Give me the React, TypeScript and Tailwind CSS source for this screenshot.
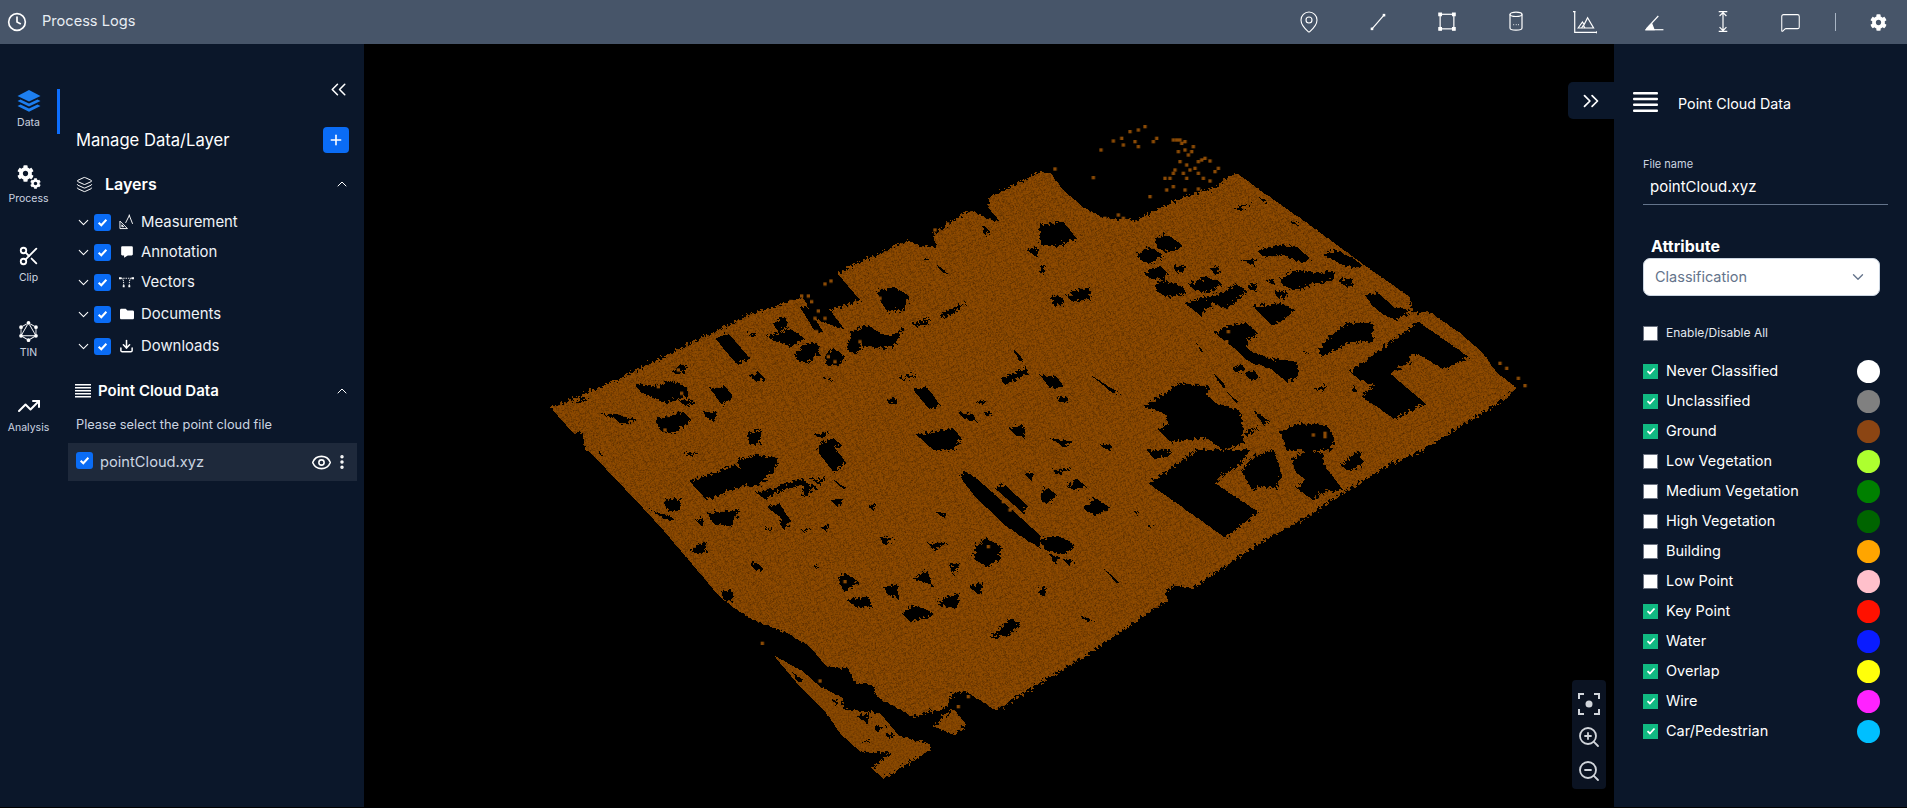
import React from 'react';
import {
  ChevronDown,
  ChevronUp,
  ChevronsLeft,
  ChevronsRight,
  Clock,
  Download,
  EllipsisVertical,
  Eye,
  Layers,
  MapPin,
  MessageSquare,
  Plus,
  Scissors,
  TrendingUp,
  ZoomIn,
  ZoomOut,
} from 'lucide-react';
import { FaCog, FaFolder } from 'react-icons/fa';
import { BiSolidMessage } from 'react-icons/bi';
import { SiGraphql } from 'react-icons/si';

const HOLES_TL = [
  '525,685 565,670 630,745 590,762', '680,680 750,655 795,685 750,710 700,690',
  '765,735 800,700 835,700 838,730 800,760 775,755', '855,735 880,715 915,740 900,765 860,768',
  '920,720 935,665 985,645 1020,670 1050,680 1095,650 1060,710 1010,715 970,705 945,730',
  '1010,545 1060,530 1110,560 1090,600 1040,605 1020,570', '1120,640 1170,625 1165,640 1125,652',
  '1200,615 1280,575 1240,610 1205,625', '395,785 420,763 445,770 415,795',
  '285,820 345,830 380,810 440,830 440,860 380,880 300,845', '510,835 555,830 580,860 545,885',
  '415,870 470,872 440,890', '490,905 530,905 525,935 495,920', '630,800 655,785 675,805 650,815',
  '165,908 230,915 290,928 245,945 225,925', '345,930 430,905 455,930 400,970 365,965',
  '90,880 150,860 120,880', '1380,810 1460,772 1465,790 1395,825', '1120,840 1160,830 1200,885 1170,900',
  '1080,805 1125,790 1120,800 1085,812', '1040,870 1070,865 1075,880 1045,880',
  '1250,905 1300,915 1310,935 1270,925', '1330,905 1360,910 1340,920',
  '1130,975 1210,960 1240,955 1265,985 1240,1020 1180,1020', '1405,955 1450,945 1455,985 1420,970',
  '620,970 665,960 660,1000 630,1005', '815,975 870,965 850,985', '840,1000 880,985 905,1005 880,1020 835,1020',
  '1300,875 1340,870 1330,885', '850,805 880,800 870,810', '1415,710 1450,750 1440,755',
  '700,640 735,620 745,650 715,665', '780,590 800,590 850,665 825,665', '620,672 650,665 640,682',
  '1150,440 1170,450 1155,455', '1190,465 1225,490 1210,490', '1330,350 1350,360 1335,380', '1460,420 1490,410 1490,440',
];

const HOLES_TR = [
  '0,345 70,335 110,385 50,410 0,405', '345,385 380,372 425,405 400,425 355,420',
  '292,430 330,412 370,435 330,460 300,450', '310,490 360,468 385,490 370,510 330,505',
  '400,470 435,465 430,485 410,488', '345,520 370,512 430,530 435,550 380,562 350,545',
  '445,525 495,500 545,520 510,548 465,540', '435,580 500,560 550,545 590,522 622,545 560,595 520,580 480,615',
  '625,525 650,520 650,540 630,540', '702,545 740,540 745,560 715,565',
  '650,420 720,405 770,410 810,445 790,460 730,435 670,440', '850,435 885,420 940,445 970,470 920,470',
  '600,450 650,448 640,465', '720,510 770,480 830,490 885,485 880,510 810,525 770,540 730,530',
  '680,515 700,505 705,525', '895,510 935,505 940,530 905,525', '640,590 720,580 765,600 730,630 695,645 670,620',
  '525,670 570,645 620,640 655,670 620,690 625,720 690,745 770,755 775,800 740,815 690,775 625,755 590,720',
  '575,775 605,760 615,780 590,790', '615,795 640,780 660,805 630,810', '525,795 555,825 545,830',
  '470,700 490,725 480,725', '975,555 1015,550 1060,590 1115,600 1070,630 1030,615 1000,590',
  '930,785 1000,735 1060,690 1135,635 1285,740 1210,778 1140,735 1105,735 1110,755 1050,790 1155,880 1065,928 965,860 1005,825 960,810',
  '870,680 920,640 1000,640 1000,695 930,695 890,720 840,740 840,715', '30,570 50,555 75,570 60,585 40,585',
  '80,560 110,540 150,530 150,565 100,575',
  '310,890 420,820 510,830 500,855 530,880 600,900 610,960 610,1000 550,1020 500,985 390,995 355,960 385,940 375,910',
  '720,965 780,940 860,945 885,990 870,1020 740,1020', '640,900 690,935 670,945', '610,970 665,945 620,980',
  '0,470 15,465 15,485 0,490', '580,295 640,275 600,300', '660,265 680,270 675,280',
  '0,795 50,800 70,830 30,835', '50,862 85,860 80,875 55,875', '750,335 780,340 765,347',
  '790,725 805,725 800,735', '560,845 600,880 590,880', '30,985 100,995 70,1010', '180,1005 215,1000 210,1020 190,1015',
  '820,835 860,825 850,845', '940,825 950,845 940,845', '150,795 240,850 220,850', '510,475 540,470 530,500',
];

const HOLES_BL = [
  '450,95 585,45 605,60 590,30 650,15 715,25 705,60 660,105 600,110 500,150', '830,0 890,0 920,40 880,65',
  '650,130 790,85 800,100 700,130 680,150', '1260,80 1275,65 1310,85 1500,255 1500,295 1400,230 1300,135',
  '1365,115 1395,105 1460,165 1450,190', '1310,285 1340,265 1385,290 1380,330 1340,350 1300,325',
  '895,385 915,368 955,395 915,430', '630,345 650,338 670,355 650,365', '1350,565 1410,505 1445,520 1405,555',
  '1220,440 1260,430 1250,475 1190,465', '1085,490 1120,465 1175,485 1180,500 1110,515',
  '1120,390 1160,360 1180,410 1150,395', '920,450 985,440 995,470 950,470', '1030,410 1075,405 1075,445 1045,435',
  '1165,280 1225,280 1180,300', '1225,345 1260,340 1240,375', '1285,410 1330,395 1320,435', '1020,260 1070,260 1030,285',
  '370,150 425,145 420,180 385,185', '330,180 380,195 410,210 380,210', '500,190 600,180 570,230 520,220',
  '465,210 490,205 490,235', '680,170 720,160 750,210 730,245 720,200', '670,235 700,235 690,240', '790,100 830,110 790,145',
  '840,230 870,225 860,245', '780,240 810,235 790,245', '545,425 580,422 575,455 550,450', '460,290 500,275 495,310 455,310',
  '1190,190 1220,185 1215,205', '990,170 1010,160 995,180', '825,350 835,345 830,365', '175,5 185,5 180,15',
  '430,12 480,5 450,20', '1450,70 1480,70 1475,95', '800,80 860,100 820,90', '870,150 920,145 890,170',
  '950,800 990,790 985,820', '1000,830 1040,825 1010,845', '880,750 895,745 885,770', '1040,850 1070,855 1045,865',
  '760,670 790,690 770,695', '960,880 1000,860 980,875', '820,95 860,80 840,105', '880,90 930,120 900,110',
];

const HOLES_BR = [
  '325,100 400,50 470,0 630,0 600,45 555,70 525,100 655,185 555,262', '605,60 640,20 700,0 725,70 710,115 665,110 635,120',
  '755,30 800,0 850,10 855,50 910,120 850,125 820,150 770,115 800,90 770,70', '900,45 960,0 970,40 930,65',
  '320,0 395,0 385,20 340,25', '0,130 25,115 50,135 25,160 5,155', '80,110 110,85 140,110 100,120',
  '130,175 165,145 215,175 165,195', '40,60 95,55 50,75', '0,270 50,255 105,285 70,315 15,300',
  '30,315 60,320 45,340', '70,330 100,330 85,345', '375,430 400,405 430,415 390,460', '285,185 300,185 290,195',
  '325,230 345,225 330,235', '0,415 20,415 15,435 0,435', '185,348 240,400 230,400', '120,495 165,515 130,510',
];

const DOTS_TR = [
  215, 88, 240, 80, 245, 100, 265, 60, 290, 55, 310, 45, 280, 90, 290, 105, 335, 90, 345, 80, 395, 85, 415, 85, 430, 90,
  410, 120, 430, 115, 455, 105, 440, 130, 415, 150, 435, 160, 460, 170, 490, 140, 505, 148, 530, 170, 520, 180, 400, 175,
  395, 185, 425, 185, 435, 200, 470, 185, 485, 200, 505, 208, 370, 200, 385, 200, 395, 225, 430, 235, 375, 235, 470, 232,
  485, 243, 325, 255, 178, 115, 40, 172, 155, 198, 150, 310, 190, 320, 230, 310, 245, 320, 1375, 755, 1395, 770, 1430, 800,
  1450, 822, 405, 85, 420, 95, 450, 120, 470, 150, 480, 145, 445, 175, 360, 560, 1020, 620, 1030, 640, 560, 660, 555, 690,
  660, 770, 620, 900, 815, 970, 850, 965, 850, 975,
];
const DOTS_TL = [
  850, 517, 868, 508, 1180, 355, 1218, 337, 780, 553, 800, 553, 748, 570, 810, 570, 830, 598, 820, 620, 850, 620, 825, 660,
  638, 622, 385, 740, 365, 755, 320, 780, 295, 788, 255, 800, 270, 795, 860, 735, 880, 750, 955, 690, 1015, 560, 380, 910,
  370, 955, 350, 825, 420, 845, 410, 775,
];
const DOTS_BL = [662, 575, 1250, 765, 1280, 735, 835, 688, 775, 660, 1385, 150, 1405, 175, 1340, 285, 910, 390];

function Crop({ x, y, holes, dots }: { x: number; y: number; holes?: string[]; dots?: number[] }) {
  return (
    <g transform={`translate(${x} ${y}) scale(0.33333)`}>
      {holes?.map((p) => <polygon key={p} points={p} fill="#000" />)}
      {dots?.map((v, i) => (i % 2 === 0 ? <rect key={i} x={v} y={dots[i + 1]} width="10" height="10" fill="#8a4a05" /> : null))}
    </g>
  );
}

function PointCloud() {
  return (
    <svg viewBox="364 44 1250 763" className="h-full w-full">
      <defs>
        <pattern id="scan" width="9" height="6" patternUnits="userSpaceOnUse" patternTransform="rotate(-27)">
          <rect width="9" height="6" fill="#8f4c05" />
          <rect y="3" width="9" height="1" fill="#703a02" />
          <rect x="4" width="1" height="6" fill="#7d4304" />
        </pattern>
        <filter id="rough" x="364" y="44" width="1250" height="763" filterUnits="userSpaceOnUse">
          <feTurbulence type="fractalNoise" baseFrequency="0.35" numOctaves="2" seed="4" result="n" />
          <feDisplacementMap in="SourceGraphic" in2="n" scale="8" result="d" />
          <feTurbulence type="fractalNoise" baseFrequency="0.6" numOctaves="1" seed="9" />
          <feColorMatrix values="0 0 0 0 0  0 0 0 0 0  0 0 0 0 0  1.2 0 0 0 -0.5" />
          <feComposite in2="d" operator="in" result="g" />
          <feMerge>
            <feMergeNode in="d" />
            <feMergeNode in="g" />
          </feMerge>
        </filter>
      </defs>
      <g filter="url(#rough)" shapeRendering="crispEdges">
        <polygon
          fill="url(#scan)"
          points="551,408 617,380 693,342 753,313 780,305 803,297 813,317 827,323 845,330 830,310 860,300 837,273 908,240 920,246 937,247 933,235 953,220 970,210 987,218 1000,222 988,207 990,197 1040,172 1050,172 1063,190 1083,207 1103,218 1137,220 1163,207 1190,195 1217,187 1223,180 1237,173 1257,188 1307,223 1367,267 1410,297 1412,313 1430,312 1460,333 1483,353 1497,373 1517,388 1507,397 1423,450 1393,463 1343,493 1307,517 1260,543 1227,565 1193,588 1173,585 1168,600 1133,623 1090,653 1040,683 997,710 990,707 967,692 952,693 948,707 913,717 877,697 873,685 855,683 848,668 827,667 810,647 787,633 753,620 737,610 720,597 703,577 663,530 643,508 588,450 585,450 583,433 573,433"
        />
        <g transform="translate(540 450) scale(0.33333)" fill="url(#scan)">
          <polygon points="700,615 790,665 840,710 910,745 905,775 1020,790 1080,860 1120,870 1170,880 1170,900 1030,985 995,955 1060,905 960,905 900,850 860,790 780,710" />
          <polygon points="1180,830 1240,775 1280,825 1240,855" />
        </g>
        <Crop x={540} y={110} holes={HOLES_TL} />
        <Crop x={1040} y={110} holes={HOLES_TR} />
        <Crop x={540} y={450} holes={HOLES_BL} />
        <Crop x={1040} y={450} holes={HOLES_BR} />
      </g>
      <Crop x={540} y={110} dots={DOTS_TL} />
      <Crop x={1040} y={110} dots={DOTS_TR} />
      <Crop x={540} y={450} dots={DOTS_BL} />
    </svg>
  );
}

function Tool({ children }: { children: React.ReactNode }) {
  return <svg viewBox="-2 -2 28 28" className="h-[24px] w-[24px]" fill="none" stroke="#fff" strokeWidth="1.4">{children}</svg>;
}

function TopBar() {
  return (
    <div className="flex h-[44px] shrink-0 items-center bg-[#475569] pl-[7px] pr-[20px] text-white">
      <Clock size={20} strokeWidth={2} />
      <span className="ml-[15px] text-[14.6px] text-[#e8edf3]">Process Logs</span>
      <div className="ml-auto flex items-center gap-[45px]">
        <MapPin size={24} strokeWidth={1.1} />
        <Tool>
          <path d="M5 20 19 4" />
          <rect x="3.500" y="18.500" width="3" height="3" fill="#fff" stroke="none" />
          <rect x="17.500" y="2.500" width="3" height="3" fill="#fff" stroke="none" />
        </Tool>
        <Tool>
          <rect x="4" y="3" width="16" height="17" strokeWidth="1.400" />
          <path d="M2.500 1.500h3v3h-3zM18.500 1.500h3v3h-3zM2.500 18.500h3v3h-3zM18.500 18.500h3v3h-3z" fill="#fff" />
        </Tool>
        <Tool>
          <ellipse cx="12" cy="3" rx="7" ry="2.600" />
          <path d="M5 3v16c0 1.500 3 2.500 7 2.500s7-1 7-2.500V3" />
          <path d="M9 15h.8M11.800 15h.8M14.600 15h.8" strokeWidth="1.400" />
        </Tool>
        <Tool>
          <path d="M0 0v24h26M-2 0h3M26 22.500v3" />
          <path d="M4 19 9 12l2 3 4-8 7 12z" />
          <path d="M8 19l2-3 2 3" />
        </Tool>
        <Tool>
          <path d="M3 20 17 5" />
          <path d="M2 21h21" />
          <path d="M3 21l6.500-6.500L12 21z" fill="#fff" />
        </Tool>
        <Tool>
          <path d="M7 0h10M7 23h10M12 0v23M8 5l4-4 4 4M8 18l4 4 4-4" />
        </Tool>
        <MessageSquare size={21} strokeWidth={1.2} className="mr-[-11px]" />
        <div className="h-[18px] w-[1px] bg-[#a9b5c4]" />
        <FaCog size={17} className="ml-[-11px]" />
      </div>
    </div>
  );
}

function RailItem({ icon, label, className }: { icon: React.ReactNode; label: string; className: string }) {
  return (
    <div className={`flex w-[57px] flex-col items-center ${className}`}>
      <div className="flex h-[24px] items-center justify-center">{icon}</div>
      <span className="mt-[3px] text-[10.5px] leading-[14px] text-[#cbd5e1]">{label}</span>
    </div>
  );
}

function Rail() {
  return (
    <div className="flex w-[60px] shrink-0 flex-col pt-[45px]">
      <div className="flex h-[45px] border-r-[3px] border-[#0d6efd]">
        <RailItem
          className=""
          label="Data"
          icon={
            <svg viewBox="0 0 24 24" className="h-[24px] w-[24px]" fill="#1d7ff0">
              <path d="M12 1 23.500 7 12 12.600.5 7z" />
              <path d="M3.500 10.400 12 14.600l8.500-4.200 3 1.500L12 17.600.5 11.900z" />
              <path d="M3.500 15.400 12 19.600l8.500-4.200 3 1.500L12 22.800.5 16.900z" />
            </svg>
          }
        />
      </div>
      <RailItem
        className="mt-[31px]"
        label="Process"
        icon={
          <div className="relative h-[24px] w-[24px]">
            <FaCog size={17} className="absolute left-0 top-0 text-white" />
            <FaCog size={11} className="absolute bottom-0 right-0 text-white" />
          </div>
        }
      />
      <RailItem className="mt-[38px]" label="Clip" icon={<Scissors size={22} className="text-white" strokeWidth={2} />} />
      <RailItem className="mt-[34px]" label="TIN" icon={<SiGraphql size={21} className="text-white" />} />
      <RailItem className="mt-[34px]" label="Analysis" icon={<TrendingUp size={24} className="text-white" strokeWidth={2} />} />
    </div>
  );
}

function BlueCheck() {
  return (
    <span className="flex h-[17px] w-[17px] shrink-0 items-center justify-center rounded-[3px] bg-[#0a6cf5]">
      <svg viewBox="0 0 12 12" className="h-[11px] w-[11px]" fill="none" stroke="#fff" strokeWidth="2.200">
        <path d="M1.800 6.200 4.700 9l5.500-6" />
      </svg>
    </span>
  );
}

const TREE = [
  {
    label: 'Measurement',
    gap: 'mt-[16px]',
    icon: (
      <svg viewBox="0 0 16 16" className="h-[16px] w-[16px]" fill="none" stroke="#fff" strokeWidth="1">
        <path d="M1 15V7l8 8zM3 13v-2l2 2z" />
        <path d="M11 1l-4 8M11 1l3.500 9M11 0v2" />
      </svg>
    ),
  },
  { label: 'Annotation', gap: 'mt-[6px]', icon: <BiSolidMessage size={14} className="text-white" /> },
  {
    label: 'Vectors',
    gap: 'mt-[6px]',
    icon: (
      <svg viewBox="0 0 16 12" className="h-[12px] w-[16px]" fill="none" stroke="#fff" strokeWidth="1">
        <path d="M2 2h12M5 10c0-4 0-7-2-8M11 10c0-4 0-7 2-8" strokeDasharray="1.500 1" />
        <path d="M0 1h2.500v2H0zM13.500 1H16v2h-2.500zM4 9.500h2v2H4zM10 9.500h2v2h-2z" fill="#fff" stroke="none" />
      </svg>
    ),
  },
  { label: 'Documents', gap: 'mt-[8px]', icon: <FaFolder size={14} className="text-white" /> },
  { label: 'Downloads', gap: 'mt-[8px]', icon: <Download size={16} strokeWidth={2.400} className="text-white" /> },
];

function DataPanel() {
  return (
    <div className="flex flex-1 flex-col pl-[8px] pr-[7px]">
      <div className="flex justify-end pr-[6px] pt-[33px]">
        <ChevronsLeft size={25} strokeWidth={1.500} className="text-white" />
      </div>
      <div className="mt-[25px] flex h-[26px] items-center justify-between pl-[8px]">
        <span className="text-[16.6px] text-white">Manage Data/Layer</span>
        <span className="mr-[8px] flex h-[26px] w-[26px] items-center justify-center rounded-[4px] bg-[#0a6cf5]">
          <Plus size={16} strokeWidth={2.400} className="text-white" />
        </span>
      </div>
      <div className="mt-[21px] flex h-[20px] items-center pl-[8px]">
        <Layers size={17} strokeWidth={1.400} className="text-white" />
        <span className="ml-[12px] text-[16px] font-semibold text-white">Layers</span>
        <ChevronUp size={16} className="ml-auto mr-[7px] text-white" strokeWidth={1.500} />
      </div>
      {TREE.map((row) => (
        <div key={row.label} className={`flex h-[24px] items-center pl-[7px] ${row.gap}`}>
          <ChevronDown size={17} strokeWidth={1.500} className="text-white" />
          <span className="ml-[2px]"><BlueCheck /></span>
          <span className="ml-[8px] flex w-[15px] justify-center">{row.icon}</span>
          <span className="ml-[7px] text-[14.9px] text-[#eef2f7]">{row.label}</span>
        </div>
      ))}
      <div className="mt-[23px] flex h-[20px] items-center pl-[7px]">
        <svg viewBox="0 0 16 14" className="h-[14px] w-[16px]" fill="#fff">
          <path d="M0 0h16v1.600H0zM0 3h16v1.600H0zM0 6h16v1.600H0zM0 9h16v1.600H0zM0 12h16v1.600H0z" />
        </svg>
        <span className="ml-[7px] text-[15px] font-semibold text-white">Point Cloud Data</span>
        <ChevronUp size={16} className="ml-auto mr-[7px] text-white" strokeWidth={1.500} />
      </div>
      <p className="mt-[14px] pl-[8px] text-[12.8px] leading-[20px] text-[#cbd5e1]">Please select the point cloud file</p>
      <div className="mt-[8px] flex h-[38px] items-center bg-[#1e293b] pl-[8px] pr-[6px]">
        <span className="mb-[4px]"><BlueCheck /></span>
        <span className="ml-[7px] text-[14.7px] text-[#cbd5e1]">pointCloud.xyz</span>
        <Eye size={21} strokeWidth={1.800} className="ml-auto text-white" />
        <EllipsisVertical size={18} strokeWidth={2.600} className="ml-[1px] text-white" />
      </div>
    </div>
  );
}

const CLASSES = [
  { name: 'Never Classified', on: true, color: 'bg-[#ffffff]' },
  { name: 'Unclassified', on: true, color: 'bg-[#808080]' },
  { name: 'Ground', on: true, color: 'bg-[#8b4513]' },
  { name: 'Low Vegetation', on: false, color: 'bg-[#adff2f]' },
  { name: 'Medium Vegetation', on: false, color: 'bg-[#008000]' },
  { name: 'High Vegetation', on: false, color: 'bg-[#006400]' },
  { name: 'Building', on: false, color: 'bg-[#ffa500]' },
  { name: 'Low Point', on: false, color: 'bg-[#ffc0cb]' },
  { name: 'Key Point', on: true, color: 'bg-[#ff1100]' },
  { name: 'Water', on: true, color: 'bg-[#0a1cff]' },
  { name: 'Overlap', on: true, color: 'bg-[#ffff0a]' },
  { name: 'Wire', on: true, color: 'bg-[#ff22ff]' },
  { name: 'Car/Pedestrian', on: true, color: 'bg-[#00bfff]' },
];

function SquareCheck({ on }: { on: boolean }) {
  if (!on) return <span className="h-[15px] w-[15px] shrink-0 border border-[#6b7280] bg-white" />;
  return (
    <span className="flex h-[15px] w-[15px] shrink-0 items-center justify-center bg-[#10b981]">
      <svg viewBox="0 0 12 12" className="h-[10px] w-[10px]" fill="none" stroke="#fff" strokeWidth="2.200">
        <path d="M1.800 6.200 4.700 9l5.500-6" />
      </svg>
    </span>
  );
}

function AttributePanel() {
  return (
    <div className="w-[293px] shrink-0 pl-[19px] pt-[48px]">
      <div className="flex h-[20px] items-center">
        <svg viewBox="0 0 25 20" className="h-[20px] w-[25px]" fill="#fff">
          <rect width="25" height="2.500" rx="1" />
          <rect y="5.800" width="25" height="2.500" rx="1" />
          <rect y="11.600" width="25" height="2.500" rx="1" />
          <rect y="17.400" width="25" height="2.500" rx="1" />
        </svg>
        <span className="ml-[20px] mt-[3px] text-[14.3px] text-white">Point Cloud Data</span>
      </div>
      <div className="pl-[10px]">
        <div className="mt-[45px] h-[14px] text-[11px] leading-[14px] text-[#cbd5e1]">File name</div>
        <div className="flex h-[34px] w-[245px] items-center border-b border-[#64748b] pl-[7px] text-[15px] text-white">pointCloud.xyz</div>
        <div className="mt-[31px] h-[20px] pl-[8px] text-[16px] font-bold leading-[20px] text-white">Attribute</div>
        <div className="mt-[2px] flex h-[38px] w-[237px] items-center justify-between rounded-[7px] border border-[#cbd5e1] bg-white pl-[11px] pr-[12px] text-[14.5px] text-[#64748b]">
          Classification
          <ChevronDown size={18} strokeWidth={1.800} className="text-[#64748b]" />
        </div>
        <div className="mt-[29px] flex h-[16px] items-center">
          <SquareCheck on={false} />
          <span className="ml-[8px] text-[12px] text-[#e2e8f0]">Enable/Disable All</span>
        </div>
        <div className="mt-[15px]">
          {CLASSES.map((c) => (
            <div key={c.name} className="flex h-[30px] w-[237px] items-center">
              <SquareCheck on={c.on} />
              <span className="ml-[8px] text-[14.5px] text-white">{c.name}</span>
              <span className={`ml-auto h-[23px] w-[23px] rounded-full ${c.color}`} />
            </div>
          ))}
        </div>
      </div>
    </div>
  );
}

export default function App() {
  return (
    <div className="flex h-[808px] flex-col bg-black [font-family:Inter,sans-serif]">
      <TopBar />
      <div className="flex h-[763px]">
        <div className="flex w-[364px] shrink-0 bg-[#0b172a]">
          <Rail />
          <DataPanel />
        </div>
        <div className="relative flex-1 bg-black">
          <PointCloud />
          <div className="absolute right-0 top-[38px] flex h-[37px] w-[46px] items-center justify-center rounded-l-[5px] bg-[#0b172a]">
            <ChevronsRight size={26} strokeWidth={1.600} className="text-white" />
          </div>
          <div className="absolute bottom-[18px] right-[8px] flex h-[109px] w-[34px] flex-col items-center gap-[10px] rounded-[4px] bg-[#0b1322] pt-[13px] text-[#d1d5db]">
            <svg viewBox="0 0 22 22" className="h-[22px] w-[22px]" fill="none" stroke="currentColor" strokeWidth="2">
              <path d="M1 6V1h5M16 1h5v5M1 16v5h5M16 21h5v-5" />
              <circle cx="11" cy="11" r="3.500" fill="currentColor" stroke="none" />
            </svg>
            <ZoomIn size={24} strokeWidth={1.800} />
            <ZoomOut size={24} strokeWidth={1.800} />
          </div>
        </div>
        <div className="bg-[#0b172a]">
          <AttributePanel />
        </div>
      </div>
    </div>
  );
}
